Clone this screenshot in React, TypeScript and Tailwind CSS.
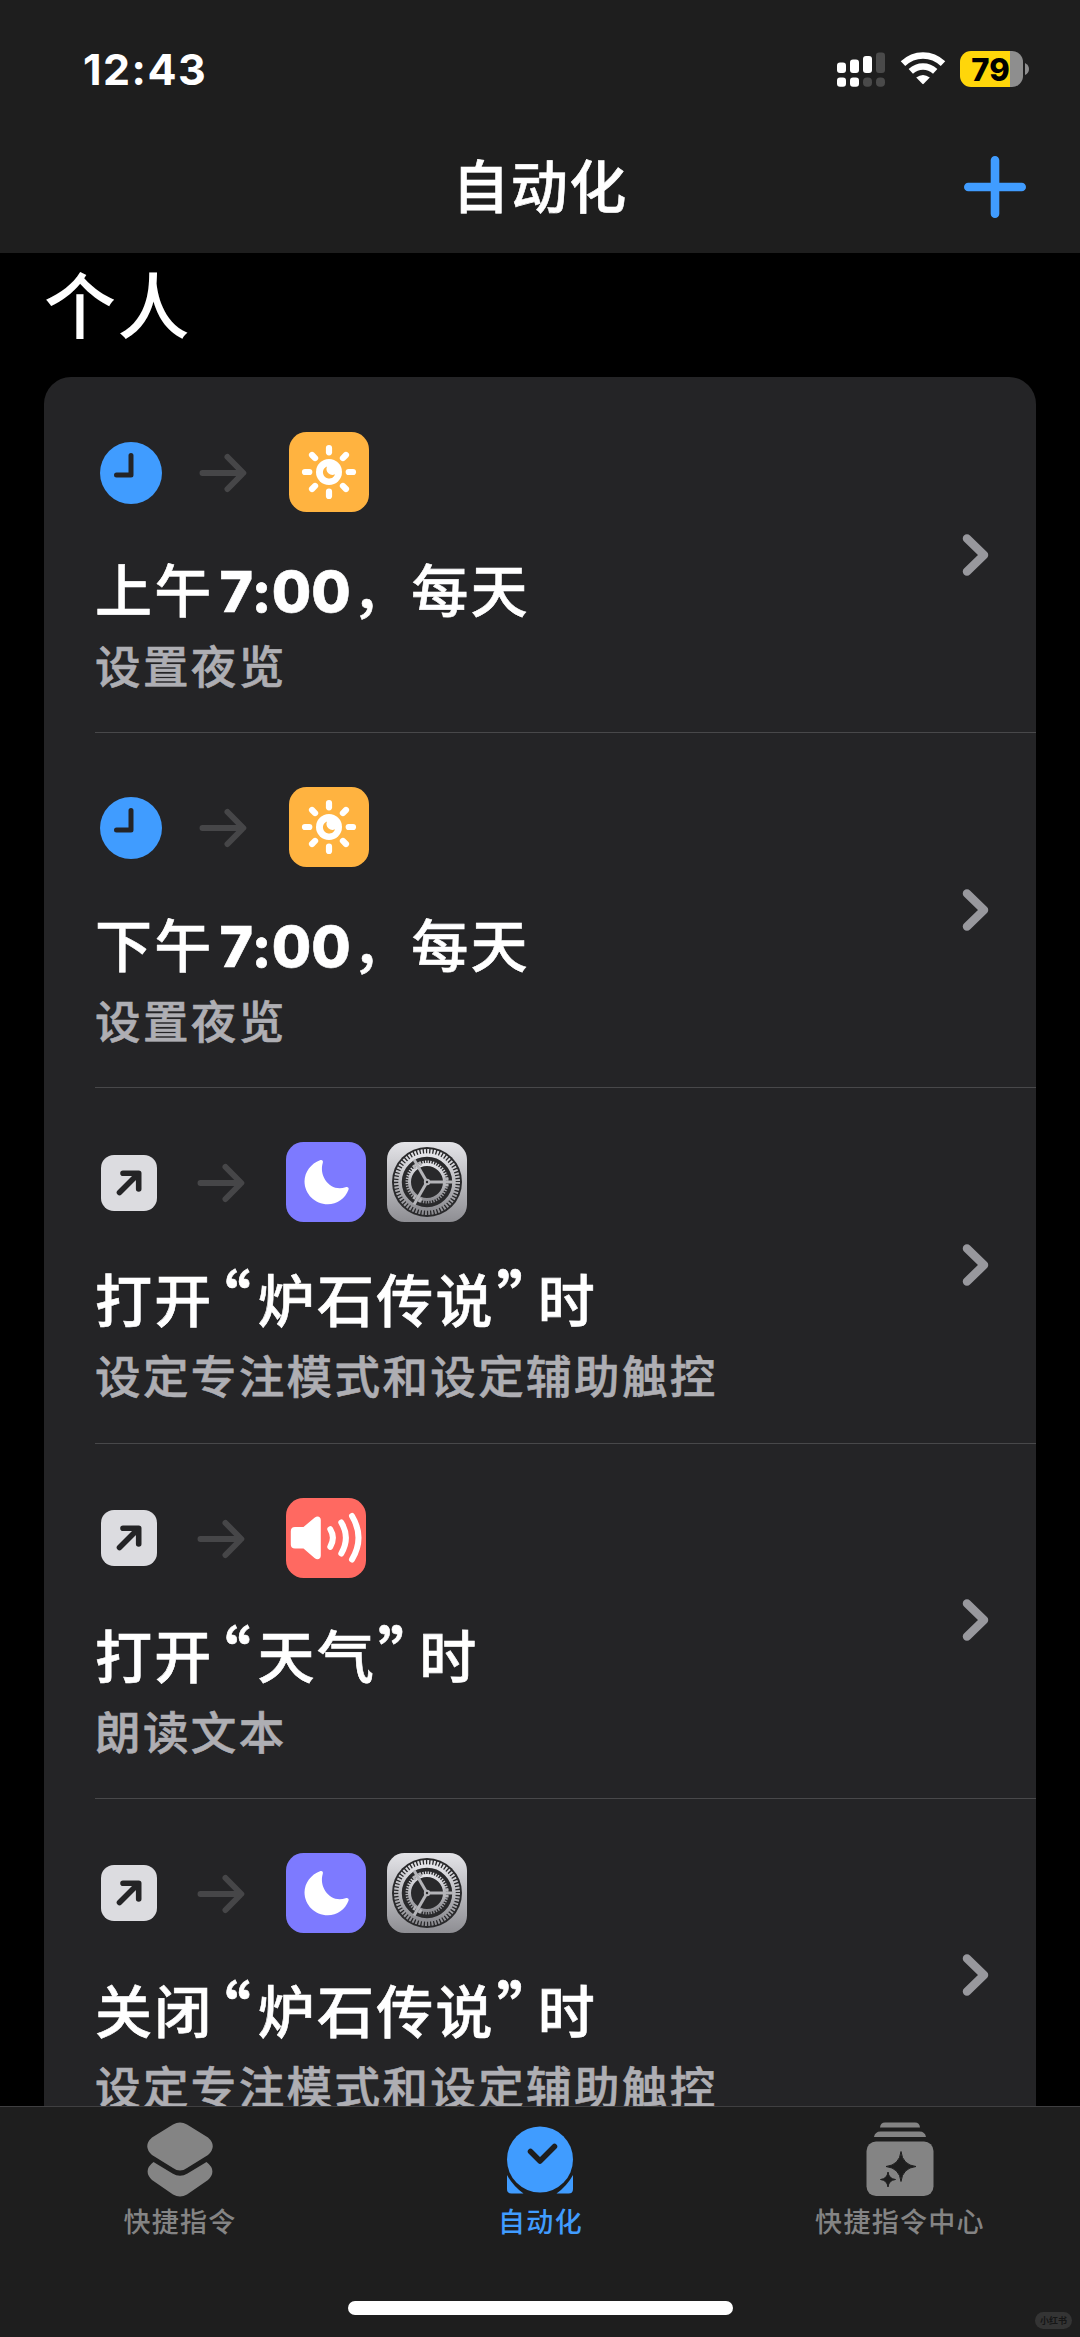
import type { ReactNode } from "react";

type Automation = {
  trigger: "time" | "app";
  actions: ("night" | "focus" | "settings" | "speak")[];
  title: ReactNode;
  subtitle: string;
};

function OpenQuote() {
  return (
    <span className="mr-[7px] inline-flex w-[37px] justify-end font-['Noto_Sans_CJK_SC'] text-[61px] font-bold leading-none tracking-normal [font-feature-settings:'palt']">
      “
    </span>
  );
}

function CloseQuote() {
  return (
    <span className="inline-flex w-[43px] justify-start pl-[2px] font-['Noto_Sans_CJK_SC'] text-[61px] font-bold leading-none tracking-normal [font-feature-settings:'palt']">
      ”
    </span>
  );
}

function TimeTitle({ period }: { period: string }) {
  return (
    <>
      {period}
      <span className="ml-[6px] mr-px font-extrabold tracking-[0.2px]">7:00</span>，每天
    </>
  );
}

function AppTitle({ verb, app }: { verb: string; app: string }) {
  return (
    <>
      {verb}
      <OpenQuote />
      {app}
      <CloseQuote />时
    </>
  );
}

const automations: Automation[] = [
  { trigger: "time", actions: ["night"], title: <TimeTitle period="上午" />, subtitle: "设置夜览" },
  { trigger: "time", actions: ["night"], title: <TimeTitle period="下午" />, subtitle: "设置夜览" },
  {
    trigger: "app",
    actions: ["focus", "settings"],
    title: <AppTitle verb="打开" app="炉石传说" />,
    subtitle: "设定专注模式和设定辅助触控",
  },
  { trigger: "app", actions: ["speak"], title: <AppTitle verb="打开" app="天气" />, subtitle: "朗读文本" },
  {
    trigger: "app",
    actions: ["focus", "settings"],
    title: <AppTitle verb="关闭" app="炉石传说" />,
    subtitle: "设定专注模式和设定辅助触控",
  },
];

function ClockIcon() {
  return (
    <svg width="62" height="62" viewBox="0 0 62 62">
      <circle cx="31" cy="31" r="31" fill="#409cff" />
      <path d="M31 13.500V33H16.500" fill="none" stroke="#242426" strokeWidth="5" strokeLinecap="round" strokeLinejoin="round" />
    </svg>
  );
}

function OpenAppIcon() {
  return (
    <svg width="56" height="56" viewBox="0 0 56 56">
      <rect width="56" height="56" rx="13" fill="#dcdce0" />
      <path d="M18.500 37.500L37 19M22 18.300H37.700V34" fill="none" stroke="#242426" strokeWidth="5.600" strokeLinecap="round" strokeLinejoin="round" />
    </svg>
  );
}

function ArrowIcon() {
  return (
    <svg width="48" height="40" viewBox="0 0 48 40">
      <path d="M3.500 20H44M28.500 4L44.300 20L28.500 36" fill="none" stroke="#464648" strokeWidth="6" strokeLinecap="round" strokeLinejoin="round" />
    </svg>
  );
}

function NightIcon() {
  return (
    <svg width="80" height="80" viewBox="0 0 80 80">
      <rect width="80" height="80" rx="17.500" fill="#ffb340" />
      <g stroke="#fff" strokeWidth="6.200" strokeLinecap="round">
        {[0, 45, 90, 135, 180, 225, 270, 315].map((deg) => (
          <path key={deg} d="M40 16V20.300" transform={`rotate(${deg} 40 40)`} />
        ))}
      </g>
      <circle cx="40" cy="40" r="13" fill="#fff" />
      <path d="M38 34.500A6.200 6.200 0 1 0 46 42.300A6 6 0 0 1 38 34.500Z" fill="#ffb340" />
    </svg>
  );
}

function FocusIcon() {
  return (
    <svg width="80" height="80" viewBox="0 0 80 80">
      <rect width="80" height="80" rx="17.500" fill="#7d7aff" />
      <path d="M34 18.300C35.800 17.300 37.500 18.800 36.800 20.800C32.500 34.500 44.500 50.500 59.500 45.300C61.500 44.600 63.300 45.600 62.500 47.800C59.300 56.500 51 62.300 41.800 62.300C28.900 62.300 18.500 52 18.500 39.300C18.500 30.300 25 21.500 34 18.300Z" fill="#fff" />
    </svg>
  );
}

function SettingsIcon() {
  return (
    <svg width="80" height="80" viewBox="0 0 80 80">
      <defs>
        <linearGradient id="metal" x1="0" y1="0" x2="0" y2="1">
          <stop offset="0" stopColor="#e4e4e8" />
          <stop offset="1" stopColor="#8e8e93" />
        </linearGradient>
      </defs>
      <rect width="80" height="80" rx="17.500" fill="url(#metal)" />
      <circle cx="40" cy="40" r="35" fill="#29292b" />
      <g fill="none" stroke="url(#metal)">
        <circle cx="40" cy="40" r="30.500" strokeWidth="5" strokeDasharray="1.900 1.294" />
        <circle cx="40" cy="40" r="27" strokeWidth="3.500" />
        <circle cx="40" cy="40" r="20" strokeWidth="3" strokeDasharray="1.300 1.318" />
        <circle cx="40" cy="40" r="17.500" strokeWidth="3" />
      </g>
      {/* spokes */}
      {[0, 120, 240].map((deg) => (
        <g key={deg} transform={`rotate(${deg} 40 40)`}>
          <path d="M42 40H66" stroke="#b4b4b8" strokeWidth="3" />
          <path d="M57 36.800H61.500M57 43.200H61.500" stroke="#b4b4b8" strokeWidth="2.500" />
        </g>
      ))}
      <circle cx="40" cy="40" r="3.200" fill="#b4b4b8" />
      <circle cx="40" cy="40" r="1.200" fill="#29292b" />
    </svg>
  );
}

function SpeakIcon() {
  return (
    <svg width="80" height="80" viewBox="0 0 80 80">
      <rect width="80" height="80" rx="17.500" fill="#ff6961" />
      <path d="M9 29H17.500L28.500 19.700C31.500 17.300 34.800 18.500 34.800 22V57.500C34.800 61.300 31.300 62.500 28.500 60L17.500 50.600H9C6.300 50.600 4.800 49.200 4.800 46.500V33.200C4.800 30.500 6.300 29 9 29Z" fill="#fff" />
      <path d="M44.300 31.200Q49.500 39.700 44.300 48.800M55.300 24.500Q64.500 39.700 55.300 55.500M66 18Q79 39.700 66 61.500" fill="none" stroke="#fff" strokeWidth="6" strokeLinecap="round" />
    </svg>
  );
}

const actionIcons = {
  night: <NightIcon />,
  focus: <FocusIcon />,
  settings: <SettingsIcon />,
  speak: <SpeakIcon />,
};

function StatusBar() {
  return (
    <div className="flex h-[138px] items-center justify-between pl-[83px] pr-[51px]">
      <span className="font-['Inter'] text-[43px] font-bold tracking-[1.500px] text-white">12:43</span>
      <div className="flex items-center">
        <svg width="48" height="36" viewBox="0 0 48 36" className="mr-[15px]">
          <g fill="#fff">
            <rect x="0" y="11.500" width="9" height="10.500" rx="3" />
            <rect x="13" y="8.500" width="9" height="13.500" rx="3" />
            <rect x="26" y="5" width="9" height="17" rx="3" />
            <rect x="0" y="26.500" width="9" height="9.300" rx="3" />
            <rect x="13" y="26.500" width="9" height="9.300" rx="3" />
          </g>
          <g fill="#4a4a4a">
            <rect x="39" y="1.500" width="9" height="20.500" rx="3" />
            <rect x="26" y="26.500" width="9" height="9.300" rx="4" />
            <rect x="39" y="26.500" width="9" height="9.300" rx="4" />
          </g>
        </svg>
        <svg width="46" height="34" viewBox="0 0 46 34" className="mr-[14px]">
          <path d="M3 11.700C14.500 0.800 31.500 0.800 43 11.700" fill="none" stroke="#fff" strokeWidth="6.500" />
          <path d="M10.800 19.300C18 12.800 28 12.800 35.200 19.300" fill="none" stroke="#fff" strokeWidth="6.500" />
          <path d="M16.200 25.500Q23 20.500 29.800 25.500L23.700 31.800Q23 32.500 22.300 31.800Z" fill="#fff" />
        </svg>
        <div className="flex h-[36px] w-[63px] items-center justify-center rounded-[11px] bg-[linear-gradient(90deg,#ffd60a_50px,#8e8e8e_50px)] pr-[2px]">
          <span className="font-['Inter'] text-[31px] font-extrabold leading-none text-black">79</span>
        </div>
        <svg width="4" height="12" viewBox="0 0 4 12" className="ml-[2px]">
          <path d="M0 0Q4 2 4 6T0 12Z" fill="#8e8e8e" />
        </svg>
      </div>
    </div>
  );
}

function AutomationRow({ item, last }: { item: Automation; last: boolean }) {
  const isTime = item.trigger === "time";
  return (
    <div className="relative flex h-[355.200px] shrink-0 pl-[51px]">
      <div className="flex-1 pt-[55px]">
        <div className="flex h-20 items-center">
          {isTime ? (
            <div className="ml-[5px] mr-[37px] mt-[2px]"><ClockIcon /></div>
          ) : (
            <div className="ml-[6px] mr-[40px] mt-[1px]"><OpenAppIcon /></div>
          )}
          <div className="mt-[2px]"><ArrowIcon /></div>
          <div className={isTime ? "ml-[42px] flex gap-5" : "ml-[41px] flex gap-[21px]"}>
            {item.actions.map((action) => (
              <div key={action}>{actionIcons[action]}</div>
            ))}
          </div>
        </div>
        <h2 className="mt-[40px] h-[80px] whitespace-nowrap text-[57px] font-medium leading-[80px] tracking-[2.300px] text-white [-webkit-text-stroke:0.6px]">
          {item.title}
        </h2>
        <p className="mt-[2px] whitespace-nowrap text-[45.500px] font-medium leading-[68px] tracking-[2.400px] text-[#aeaeb3] [-webkit-text-stroke:0.6px]">
          {item.subtitle}
        </p>
      </div>
      <svg width="28" height="46" viewBox="0 0 28 46" className="mr-[46px] self-center">
        <path d="M5 6.500L22 23L5 39.500" fill="none" stroke="#98989d" strokeWidth="8.500" strokeLinecap="round" strokeLinejoin="round" />
      </svg>
      {!last && <div className="absolute -bottom-px left-[51px] right-0 h-px bg-[#48484a]"></div>}
    </div>
  );
}

function TabBar() {
  return (
    <nav className="flex h-[231px] shrink-0 flex-col border-t border-[#3f3f41] bg-[#1e1e1e]">
      <div className="grid h-[140px] grid-cols-3 text-[27px] font-medium tracking-[1.300px] text-[#848484]">
        <div className="flex flex-col items-center">
          <svg width="68" height="76" viewBox="0 0 68 76" className="mt-[15px]">
            <path d="M27 2.500Q34 -1.500 41 2.500L62 15.500Q71.500 24 62 33L41 46Q34 51 27 46L6 33Q-3.500 24 6 15.500Z" fill="#848484" />
            <path d="M7.500 40L26.500 51.500Q34 56 41.500 51.500L60.500 40Q71.500 48.500 62 58L41 72.500Q34 76.500 27 72.500L6 58Q-3.500 48.500 7.500 40Z" fill="#848484" />
          </svg>
          <span className="mt-[5px] leading-[40px]">快捷指令</span>
        </div>
        <div className="flex flex-col items-center text-[#409cff]">
          <svg width="68" height="76" viewBox="0 0 68 76" className="mt-[15px]">
            <path d="M1 53V67Q1 71.500 5.500 71.500H17.500Q7 64 1 53ZM67 53V67Q67 71.500 62.500 71.500H50.500Q61 64 67 53Z" fill="#409cff" />
            <circle cx="34" cy="37.500" r="34.500" fill="#1e1e1e" />
            <circle cx="34" cy="37.500" r="33" fill="#409cff" />
            <path d="M24.500 29.500L34 39L48.500 24.500" fill="none" stroke="#1e1e1e" strokeWidth="5.500" strokeLinecap="round" strokeLinejoin="round" />
          </svg>
          <span className="mt-[5px] pl-px leading-[40px]">自动化</span>
        </div>
        <div className="flex flex-col items-center">
          <svg width="68" height="76" viewBox="0 0 68 76" className="mt-[15px]">
            <path d="M14 5.500Q14.500 0.500 19 0.500H49Q53.500 0.500 54 5.500ZM8 15Q9 9.500 14.500 9.500H53.500Q59 9.500 60 15Z" fill="#848484" />
            <rect x="0.500" y="19.500" width="67" height="54.500" rx="9.500" fill="#848484" />
            <path d="M35 29.500Q36.500 43 50 44.500Q36.500 46 35 59.500Q33.500 46 20 44.500Q33.500 43 35 29.500ZM22 50Q22.800 56.700 29.500 57.500Q22.800 58.300 22 65Q21.200 58.300 14.500 57.500Q21.200 56.700 22 50Z" fill="#1e1e1e" stroke="#1e1e1e" />
          </svg>
          <span className="mt-[5px] leading-[40px]">快捷指令中心</span>
        </div>
      </div>
      <div className="relative flex flex-1 justify-center pt-[54px]">
        <div className="h-[14px] w-[385px] rounded-full bg-white"></div>
        <span className="absolute bottom-[8px] right-[8px] flex h-[17px] w-[37px] items-center justify-center rounded-full bg-[#343434] text-[9px] font-bold leading-none text-[#161616]">
          小红书
        </span>
      </div>
    </nav>
  );
}

export default function App() {
  return (
    <div className="flex h-[2337px] w-[1080px] flex-col overflow-hidden bg-black font-['Inter','Noto_Sans_CJK_SC',sans-serif]">
      <header className="h-[253px] shrink-0 bg-[#1e1e1e]">
        <StatusBar />
        <div className="grid h-[98px] grid-cols-[1fr_auto_1fr] items-center pr-[54px]">
          <span className="w-[54px]"></span>
          <h1 className="pl-[54px] pt-[2px] text-[57px] font-medium leading-[80px] tracking-[1.500px] text-white [-webkit-text-stroke:0.6px]">自动化</h1>
          <svg width="62" height="62" viewBox="0 0 62 62" className="justify-self-end">
            <path d="M31 4.300V57.700M4.300 31H57.700" stroke="#409cff" strokeWidth="8.600" strokeLinecap="round" />
          </svg>
        </div>
      </header>

      <main className="flex min-h-0 flex-1 flex-col overflow-hidden px-[44px]">
        <h2 className="h-[124px] shrink-0 pt-[2px] text-[72px] font-medium leading-[104px] tracking-[1.500px] text-white">个人</h2>
        <div className="flex min-h-0 flex-1 flex-col overflow-hidden rounded-t-[27px] bg-[#242426]">
          {automations.map((item, i) => (
            <AutomationRow key={i} item={item} last={i === automations.length - 1} />
          ))}
        </div>
      </main>

      <TabBar />
    </div>
  );
}
